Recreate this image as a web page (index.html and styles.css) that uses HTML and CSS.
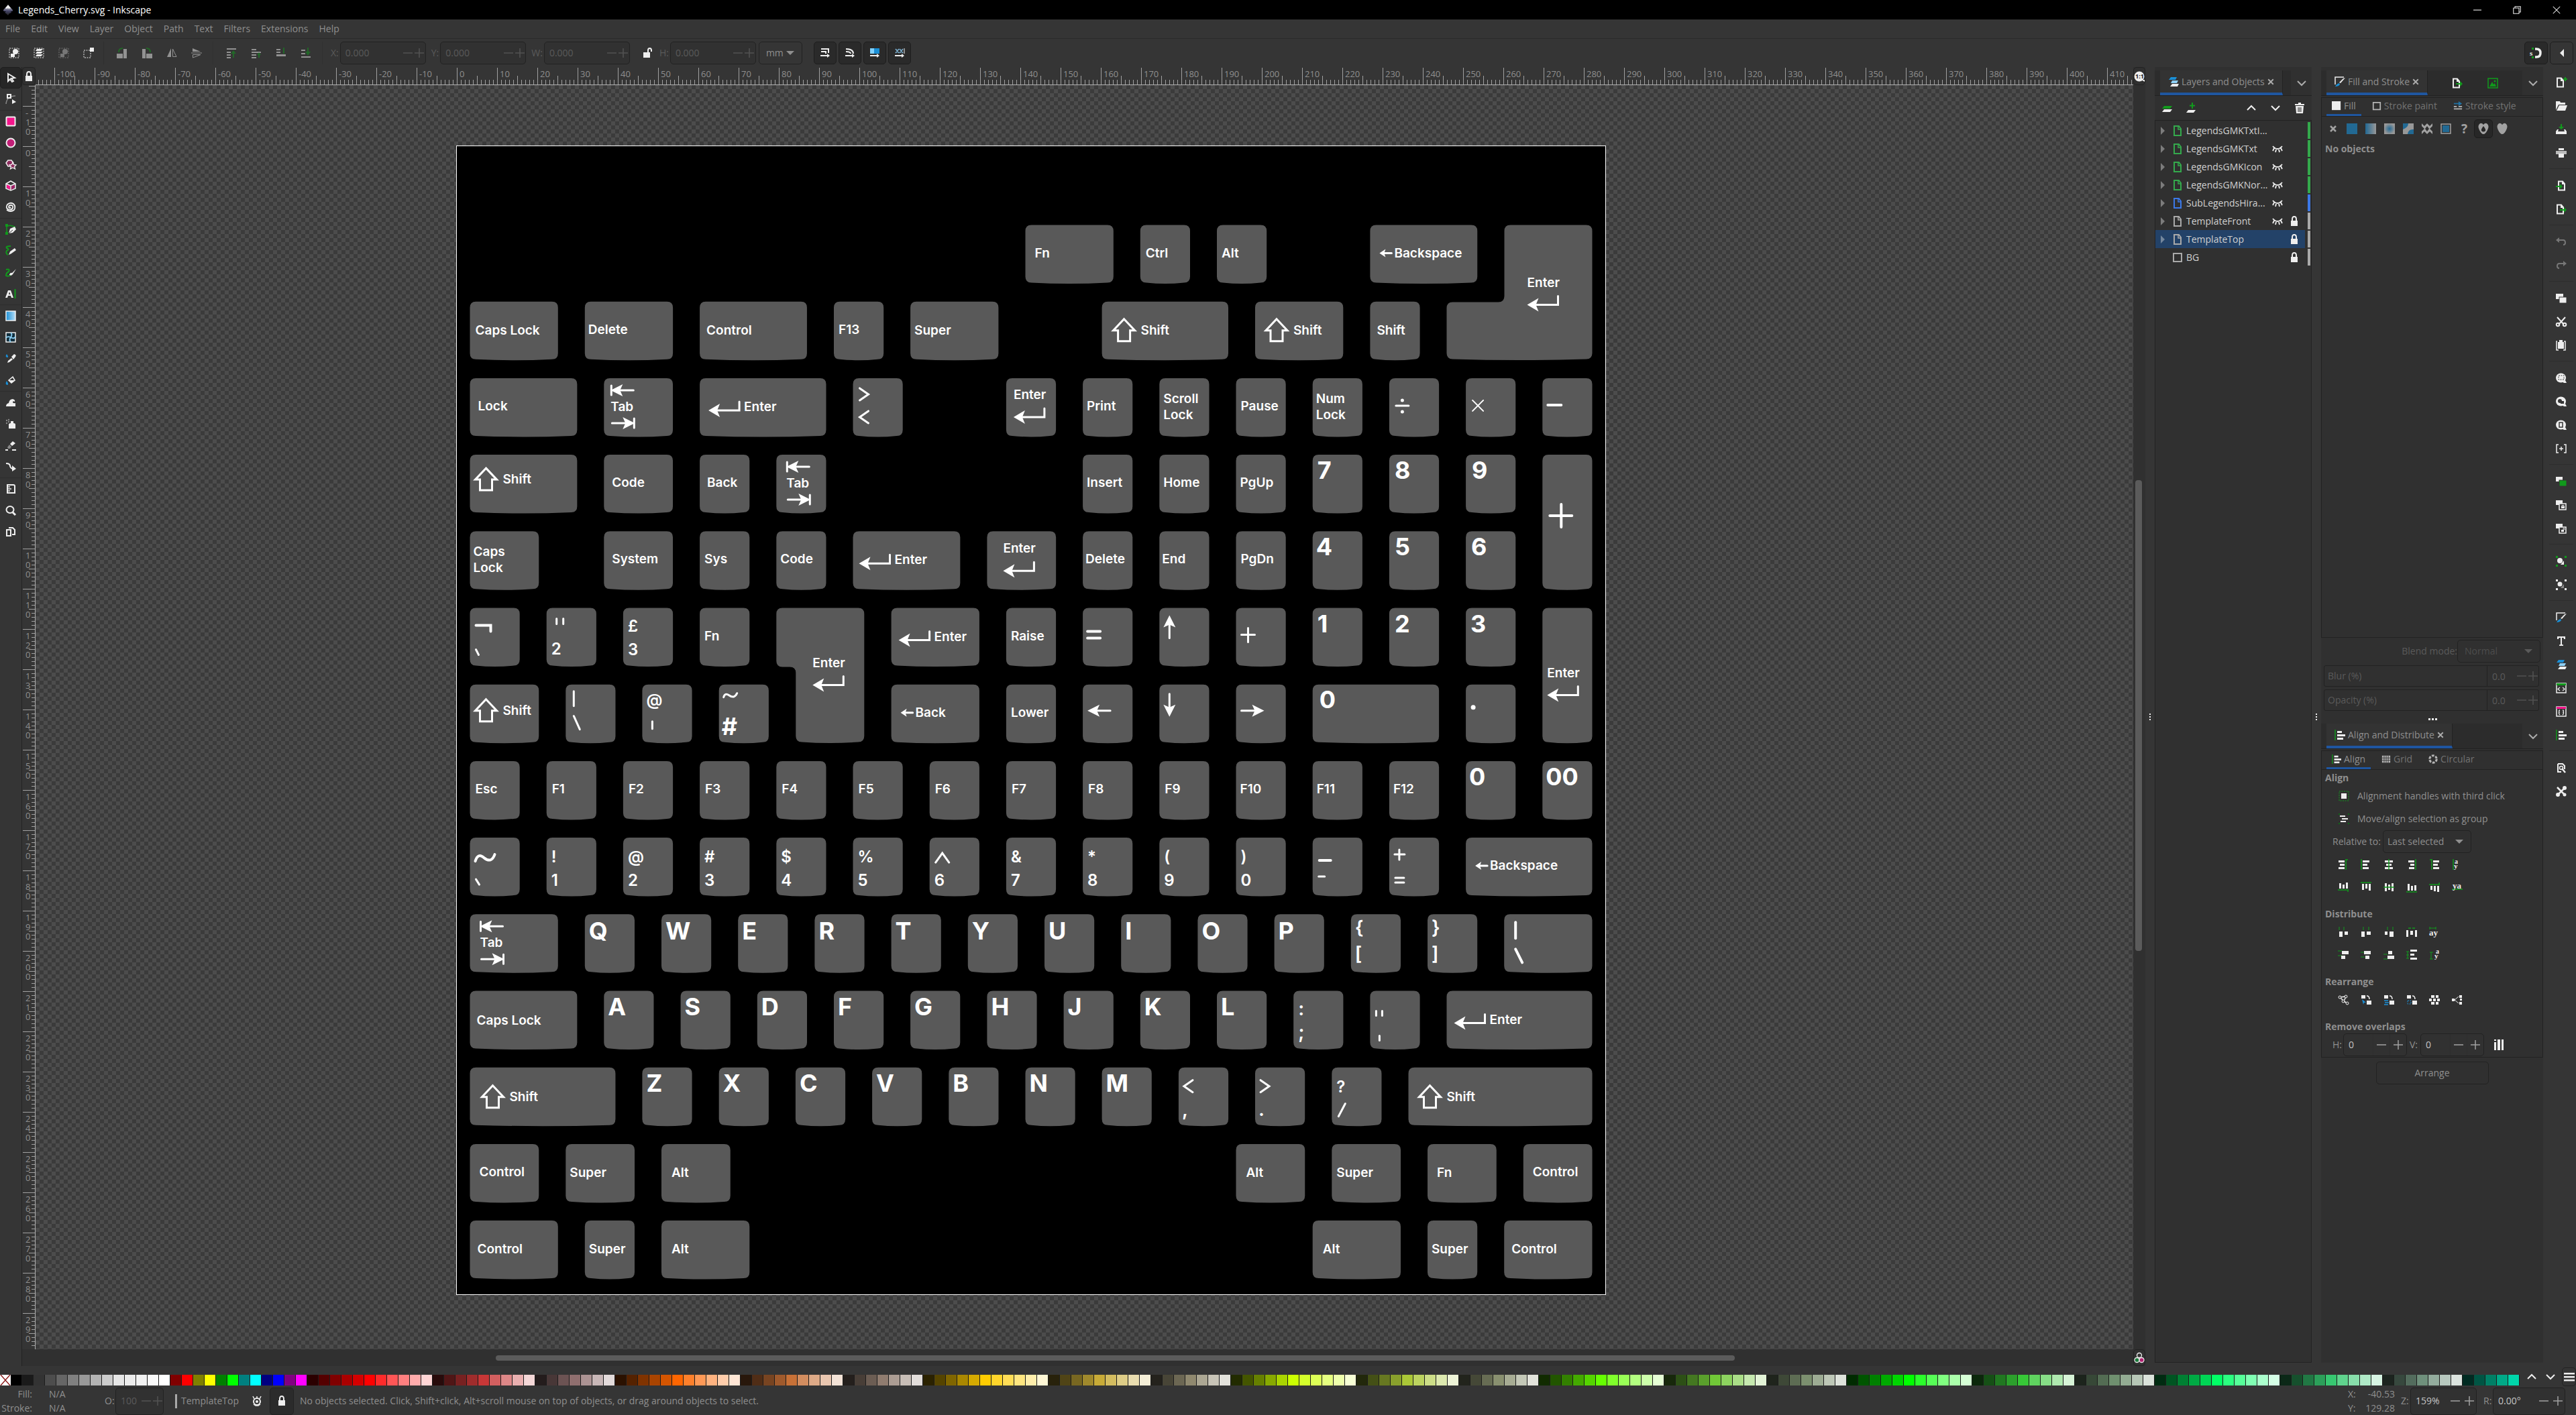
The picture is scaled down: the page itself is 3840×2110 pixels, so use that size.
FILE: index.html
```html
<!DOCTYPE html>
<html lang="en">
<head>
    <meta charset="UTF-8">
    <meta name="viewport" content="width=device-width, initial-scale=1.0">
    <title>Legends_Cherry.svg - Inkscape</title>
    <link rel="stylesheet" href="styles.css">
</head>
<body>
    <!-- Title bar -->
    <header class="titlebar">
        <span data-icon="logo"></span>
        <h1 class="title">Legends_Cherry.svg - Inkscape</h1>
        <div class="window-buttons">
            <button aria-label="Minimize" data-icon="minimize"></button>
            <button aria-label="Restore" data-icon="restore"></button>
            <button aria-label="Close" data-icon="winclose"></button>
        </div>
    </header>

    <!-- Menu -->
    <nav class="menubar">
        <a href="#">File</a>
        <a href="#">Edit</a>
        <a href="#">View</a>
        <a href="#">Layer</a>
        <a href="#">Object</a>
        <a href="#">Path</a>
        <a href="#">Text</a>
        <a href="#">Filters</a>
        <a href="#">Extensions</a>
        <a href="#">Help</a>
    </nav>

    <!-- Selector tool controls -->
    <div class="controls">
        <div class="control-group" data-buttons="selectAll selectLayers deselect touchSelect"></div>
        <div class="control-group dim" data-buttons="rotateLeft rotateRight flipH flipV"></div>
        <div class="control-group dim" data-buttons="raiseTop raise lower lowerBottom"></div>
        <div class="coords">
            <label for="pos-x">X:</label>
            <div class="spin disabled"><input id="pos-x" value="0.000" disabled><button disabled aria-label="Decrease X" data-icon="minus"></button><button disabled aria-label="Increase X" data-icon="plus"></button></div>
            <label for="pos-y">Y:</label>
            <div class="spin disabled"><input id="pos-y" value="0.000" disabled><button disabled aria-label="Decrease Y" data-icon="minus"></button><button disabled aria-label="Increase Y" data-icon="plus"></button></div>
            <label for="size-w">W:</label>
            <div class="spin disabled"><input id="size-w" value="0.000" disabled><button disabled aria-label="Decrease width" data-icon="minus"></button><button disabled aria-label="Increase width" data-icon="plus"></button></div>
            <button class="tool" aria-label="Lock ratio" data-icon="unlock"></button>
            <label for="size-h">H:</label>
            <div class="spin disabled"><input id="size-h" value="0.000" disabled><button disabled aria-label="Decrease height" data-icon="minus"></button><button disabled aria-label="Increase height" data-icon="plus"></button></div>
            <div class="dropdown units"><select aria-label="Units"><option>mm</option></select></div>
        </div>
        <div class="toggles" data-buttons="scaleStroke scaleCorners moveGradients movePatterns"></div>
        <div class="toggles snap" data-buttons="magnet collapse"></div>
    </div>

    <main class="workspace">
        <!-- Toolbox -->
        <div class="toolbox" data-buttons="select node | rect ellipse star box3d spiral | pen pencil brush type | gradient mesh dropper bucket | tweak spray eraser connector | measure zoom pages"></div>

        <!-- Canvas with rulers and scrollbars -->
        <div class="desk">
            <button class="guide-lock" aria-label="Lock guides" data-icon="lock"></button>
            <div class="ruler ruler-top"></div>
            <button class="zoom-fit" aria-label="Zoom 1:1" data-icon="oneToOne"></button>
            <div class="ruler ruler-left"></div>
            <div class="canvas"></div>
            <div class="scroll-v"><div class="thumb"></div></div>
            <div class="corner"></div>
            <div class="scroll-h"><div class="thumb"></div></div>
            <button class="color-managed" aria-label="Color managed view" data-icon="cms"></button>
        </div>

        <div class="grip" data-icon="dotsV"></div>

        <!-- Layers dialog -->
        <section class="dock layers">
            <div class="tabs">
                <div class="tab"><span data-icon="layers"></span>Layers and Objects<button aria-label="Close Layers" data-icon="close"></button></div>
                <button class="tab-menu" aria-label="Dialog menu" data-icon="down"></button>
            </div>
            <div class="layer-tools">
                <div data-buttons="newLayer addLayer"></div>
                <div data-buttons="up down trash"></div>
            </div>
            <div class="layer-list"></div>
        </section>

        <div class="grip" data-icon="dotsV"></div>

        <!-- Fill and stroke, align and distribute -->
        <div class="dock properties">
            <section class="fill-stroke">
                <div class="tabs">
                    <div class="tab"><span data-icon="fillStroke"></span>Fill and Stroke<button aria-label="Close Fill and Stroke" data-icon="close"></button></div>
                    <div class="tab-icons" data-buttons="export image"></div>
                    <button class="tab-menu" aria-label="Dialog menu" data-icon="down"></button>
                </div>
                <div class="page fill-page">
                    <div class="subtabs">
                        <button class="active"><span data-icon="fillBox"></span>Fill</button>
                        <button><span data-icon="strokeBox"></span>Stroke paint</button>
                        <button><span data-icon="strokeStyle"></span>Stroke style</button>
                    </div>
                    <div class="paints" data-buttons="none flat linear radial meshGrad pattern swatch unknown evenodd nonzero"></div>
                    <h2 class="heading">No objects</h2>
                </div>
                <div class="blend">
                    <label for="blend">Blend mode:</label>
                    <div class="dropdown disabled"><select id="blend" disabled><option>Normal</option></select></div>
                </div>
                <div class="scale-row">
                    <label for="blur">Blur (%)</label>
                    <input id="blur" value="0.0" disabled><button disabled aria-label="Less blur" data-icon="minus"></button><button disabled aria-label="More blur" data-icon="plus"></button>
                </div>
                <div class="scale-row">
                    <label for="opacity">Opacity (%)</label>
                    <input id="opacity" value="0.0" disabled><button disabled aria-label="Less opacity" data-icon="minus"></button><button disabled aria-label="More opacity" data-icon="plus"></button>
                </div>
            </section>

            <div class="grip-h" data-icon="dotsH"></div>

            <section class="align">
                <div class="tabs">
                    <div class="tab"><span data-icon="align"></span>Align and Distribute<button aria-label="Close Align" data-icon="close"></button></div>
                    <button class="tab-menu" aria-label="Dialog menu" data-icon="down"></button>
                </div>
                <div class="page">
                    <div class="subtabs">
                        <button class="active"><span data-icon="align"></span>Align</button>
                        <button><span data-icon="grid"></span>Grid</button>
                        <button><span data-icon="circular"></span>Circular</button>
                    </div>
                    <h2 class="heading">Align</h2>
                    <button class="option"><span data-icon="handles"></span>Alignment handles with third click</button>
                    <button class="option"><span data-icon="group"></span>Move/align selection as group</button>
                    <div class="relative">
                        <label for="relative">Relative to:</label>
                        <div class="dropdown"><select id="relative"><option>Last selected</option></select></div>
                    </div>
                    <div class="icon-row" data-buttons="alRightAnchor alLeft alCenter alRight alLeftAnchor alTextH"></div>
                    <div class="icon-row" data-buttons="alBottomAnchor alTop alMiddle alBottom alTopAnchor alTextV"></div>
                    <h2 class="heading spaced">Distribute</h2>
                    <div class="icon-row" data-buttons="diLeft diCenter diRight diGapH diTextH"></div>
                    <div class="icon-row" data-buttons="diTop diMiddle diBottom diGapV diTextV"></div>
                    <h2 class="heading spaced">Rearrange</h2>
                    <div class="icon-row" data-buttons="graph swapSel swapZ swapRot random unclump"></div>
                    <h2 class="heading spaced">Remove overlaps</h2>
                    <div class="overlaps">
                        <label for="gap-h">H:</label>
                        <div class="spin"><input id="gap-h" value="0"><button aria-label="Decrease H" data-icon="minus"></button><button aria-label="Increase H" data-icon="plus"></button></div>
                        <label for="gap-v">V:</label>
                        <div class="spin"><input id="gap-v" value="0"><button aria-label="Decrease V" data-icon="minus"></button><button aria-label="Increase V" data-icon="plus"></button></div>
                        <button class="tool" aria-label="Remove overlaps" data-icon="overlap"></button>
                    </div>
                </div>
                <button class="arrange">Arrange</button>
            </section>
        </div>

        <!-- Commands bar -->
        <div class="commands" data-buttons="docNew open save print | import export | undo redo | duplicate cut paste | zoomSel zoomDraw zoomPage zoomCenter | clone cloneLock cloneUnlock | groupObj ungroup | fillStroke text layers xml selectors align | docProps prefs"></div>
    </main>

    <!-- Palette -->
    <div class="palette-bar">
        <div class="palette"></div>
        <div class="palette-buttons" data-buttons="up down menu"></div>
    </div>

    <!-- Status bar -->
    <footer class="status">
        <div class="style-info">
            <span>Fill:</span><span>N/A</span>
            <span>Stroke:</span><span>N/A</span>
        </div>
        <label class="off" for="master-opacity">O:</label>
        <div class="spin small disabled"><input id="master-opacity" value="100" disabled><button disabled aria-label="Less" data-icon="minus"></button><button disabled aria-label="More" data-icon="plus"></button></div>
        <button class="current-layer">TemplateTop</button>
        <button class="tool" aria-label="Layer visibility" data-icon="eye"></button>
        <button class="tool pressed" aria-label="Layer lock" data-icon="lock"></button>
        <p class="message">No objects selected. Click, Shift+click, Alt+scroll mouse on top of objects, or drag around objects to select.</p>
        <div class="pointer">
            <span>X:</span><span>-40.53</span>
            <span>Y:</span><span>129.28</span>
        </div>
        <label for="zoom">Z:</label>
        <div class="spin zoom"><input id="zoom" value="159%"><button aria-label="Zoom out" data-icon="minus"></button><button aria-label="Zoom in" data-icon="plus"></button></div>
        <label for="rotation">R:</label>
        <div class="spin zoom"><input id="rotation" value="0.00°"><button aria-label="Rotate left" data-icon="minus"></button><button aria-label="Rotate right" data-icon="plus"></button></div>
    </footer>

    <script src="script.js"></script>
</body>
</html>
```
FILE: styles.css
```css
/* Global Styles */
* {
    box-sizing: border-box;
}

html, body {
    height: 100%;
    margin: 0;
}

body {
    display: flex;
    flex-direction: column;
    overflow: hidden;
    background: #353535;
    color: #8f8f8f;
    font: 14px/16px "Open Sans", "Noto Sans", sans-serif;
}

button, input, select {
    margin: 0;
    padding: 0;
    border: none;
    background: none;
    color: inherit;
    font: inherit;
}

button {
    display: flex;
    align-items: center;
    justify-content: center;
    white-space: nowrap;
}

svg {
    display: block;
}

[data-icon], [data-buttons] {
    display: flex;
    align-items: center;
}

.icon {
    width: 16px;
    height: 16px;
    overflow: visible;
}

/* Title bar */
.titlebar {
    display: flex;
    align-items: center;
    height: 29px;
    padding-left: 4px;
    gap: 7px;
    background: #000;
    color: #fff;
    flex: none;
}

.title {
    margin: 0;
    flex: 1;
    font-size: 14px;
    font-weight: 400;
}

.window-buttons {
    display: flex;
}

.window-buttons button {
    width: 59px;
    height: 28px;
}

.window-buttons .icon {
    width: 12px;
    height: 12px;
}

/* Menu */
.menubar {
    display: flex;
    align-items: center;
    gap: 16px;
    height: 29px;
    padding-left: 8px;
    border-bottom: 1px solid #2b2b2b;
    flex: none;
}

.menubar a {
    color: inherit;
    text-decoration: none;
}

/* Selector tool controls */
.controls {
    display: flex;
    align-items: center;
    height: 42px;
    padding: 0 4px 0 2px;
    flex: none;
}

.control-group {
    padding: 0 4px 0 0;
    border-right: 1px solid #2e2e2e;
}

.control-group button {
    width: 37px;
    height: 34px;
}

.control-group + .control-group {
    padding: 0 6px 0 8px;
}

.dim {
    opacity: 0.5;
}

.coords {
    display: flex;
    align-items: center;
    padding-left: 12px;
}

.coords label {
    color: #5a5a5a;
    padding-right: 2px;
}

.coords .spin {
    width: 128px;
    margin-right: 8px;
}

.coords .units {
    margin-left: -4px;
}

.coords .tool {
    width: 36px;
}

.spin {
    display: flex;
    align-items: center;
    height: 34px;
    border: 1px solid #222;
    border-radius: 5px;
    background: #313131;
    color: #c4c4c4;
}

.spin input {
    flex: 1;
    min-width: 0;
    padding-left: 7px;
}

.spin button {
    width: 25px;
    height: 32px;
    border-left: 1px solid #2e2e2e;
}

.spin .icon {
    opacity: 0.6;
}

.disabled, .disabled input {
    color: #5a5a5a;
}

.disabled .icon {
    opacity: 0.18;
}

.coords .spin button {
    width: 17px;
    border: none;
}

.dropdown {
    position: relative;
    display: flex;
    height: 34px;
    border: 1px solid #222;
    border-radius: 5px;
}

.dropdown select {
    width: 100%;
    padding: 0 10px;
    appearance: none;
}

.dropdown option {
    background: #313131;
}

.dropdown::after {
    content: "";
    position: absolute;
    right: 11px;
    top: 13px;
    border: 6px solid transparent;
    border-top-color: currentColor;
    border-bottom: none;
    pointer-events: none;
}

.units {
    width: 65px;
}

.toggles {
    gap: 3px;
    margin-left: 17px;
}

.toggles button {
    width: 34px;
    height: 34px;
    border: 1px solid #1e1e1e;
    border-radius: 5px;
    background: #2a2a2a;
}

.snap {
    margin-left: auto;
}

.snap button {
    width: 35px;
}

.snap button + button {
    background: none;
}

/* Main area */
.workspace {
    display: flex;
    flex: 1;
    min-height: 0;
}

.toolbox {
    flex-direction: column;
    width: 33px;
    border-right: 1px solid #232323;
}

.toolbox button {
    width: 32px;
    height: 32px;
    flex: none;
}

.toolbox button:first-child {
    border: 1px solid #1e1e1e;
    border-radius: 5px;
    background: #262626;
}

.toolbox hr {
    width: 100%;
    margin: 0;
    border: none;
    border-top: 1px solid #2d2d2d;
}

/* Canvas */
.desk {
    display: grid;
    grid-template-columns: 20px 1fr 18px;
    grid-template-rows: 27px 1fr 25px;
    flex: 1;
    min-width: 0;
    background: #303030;
}

.guide-lock, .zoom-fit, .color-managed {
    border: 1px solid #222;
    border-radius: 5px;
}

.ruler {
    display: flex;
    overflow: hidden;
    background-color: #353535;
    font-size: 13px;
    line-height: 14px;
}

/* 1mm is 6px, the page starts 628px right of and 91px below the canvas corner */
.ruler-top {
    padding-left: 28px;
    border-bottom: 1px solid #b0b0b0;
    background-image:
        repeating-linear-gradient(90deg, #a0a0a0 0 1px, transparent 1px 60px),
        repeating-linear-gradient(90deg, #a0a0a0 0 1px, transparent 1px 30px),
        repeating-linear-gradient(90deg, #a0a0a0 0 1px, transparent 1px 6px);
    background-size: 3600px 25px, 3600px 13px, 3600px 7px;
    background-position: -32px 100%, -32px 100%, -32px 100%;
    background-repeat: repeat-x;
}

.ruler-top span {
    flex: 0 0 60px;
    padding: 3px 0 0 4px;
}

.ruler-left {
    flex-direction: column;
    padding-top: 31px;
    border-right: 1px solid #b0b0b0;
    background-image:
        repeating-linear-gradient(#a0a0a0 0 1px, transparent 1px 60px),
        repeating-linear-gradient(#a0a0a0 0 1px, transparent 1px 30px),
        repeating-linear-gradient(#a0a0a0 0 1px, transparent 1px 6px);
    background-size: 18px 3600px, 9px 3600px, 5px 3600px;
    background-position: 100% -29px;
    background-repeat: repeat-y;
}

.ruler-left span {
    flex: 0 0 60px;
    width: 8px;
    margin-left: 5px;
    padding-top: 3px;
    word-break: break-all;
}

.canvas {
    overflow: hidden;
    background: repeating-conic-gradient(#3b3b3b 0 25%, #4c4c4c 0 50%) 0 0 / 12px 12px;
}

.canvas svg {
    width: 100%;
    height: 100%;
}

.keycap {
    fill: #595959;
}

.legend {
    fill: #fff;
    stroke: none;
    font-family: Inter, "Liberation Sans", sans-serif;
    font-size: 19px;
    font-weight: 600;
}

.symbol {
    font-size: 24px;
}

.bracket {
    font-size: 28px;
}

.letter {
    font-size: 36px;
    font-weight: 700;
}

.stroke {
    fill: none;
    stroke: #fff;
    stroke-width: 3;
    stroke-linecap: round;
}

.scroll-v {
    padding: 589px 5px 0 3px;
}

.scroll-v .thumb {
    height: 702px;
}

.scroll-h {
    padding: 9px 594px 0 686px;
}

.scroll-h .thumb {
    height: 8px;
}

.thumb {
    border-radius: 4px;
    background: #5b5b5b;
}

.grip {
    width: 14px;
    justify-content: center;
}

.grip-h {
    height: 15px;
    justify-content: center;
}

/* Docked dialogs */
.dock {
    display: flex;
    flex-direction: column;
    padding-top: 5px;
    margin-bottom: 5px;
    background: #303030;
}

.tabs {
    display: flex;
    height: 38px;
    border-bottom: 1px solid #222;
    background: #2c2c2c;
}

.tab {
    display: flex;
    align-items: center;
    gap: 4px;
    margin-left: 8px;
    padding: 0 12px;
    border-bottom: 4px solid #1f56a0;
    border-right: 1px solid #222;
    background: #333;
    white-space: nowrap;
}

.tab button .icon {
    width: 10px;
    height: 10px;
    opacity: 0.65;
}

.tab-menu {
    width: 31px;
    margin-left: auto;
    background: #303030;
}

.tab-menu .icon {
    opacity: 0.65;
}

.tab-icons {
    flex: 1;
    justify-content: space-evenly;
}

.layers {
    width: 234px;
}

.layer-tools {
    display: flex;
    justify-content: space-between;
    height: 36px;
}

.layer-tools button {
    width: 36px;
    height: 36px;
}

.layer-list {
    flex: 1;
    padding-top: 1px;
    border: 1px solid #222;
}

.layer {
    display: grid;
    grid-template-columns: 22px 22px 1fr 24px 26px 7px 5px;
    align-items: center;
    height: 27px;
    color: #d0d0d0;
}

.layer .icon {
    margin: 0 auto;
}

.layer .expand {
    opacity: 0.4;
}

.layer.selected {
    background: linear-gradient(#234268, #234268) 0 0 / calc(100% - 9px) 100% no-repeat;
}

.layer .name {
    padding-left: 2px;
    white-space: nowrap;
}

.tag {
    grid-column: 7;
    width: 4px;
    height: 25px;
    background: #a9a9a9;
}

.tag.green {
    background: #34a94c;
}

.tag.blue {
    background: #3b78e7;
}

.properties {
    width: 331px;
}

.page {
    margin-top: 2px;
    padding-bottom: 1px;
    border: 1px solid #222;
}

.fill-page {
    height: 806px;
}

.subtabs {
    display: flex;
    gap: 8px;
    height: 28px;
    padding-left: 7px;
    border-bottom: 1px solid #222;
}

.subtabs button {
    gap: 4px;
    padding: 0 8px;
    border-bottom: 3px solid transparent;
    opacity: 0.7;
}

.subtabs .active {
    border-color: #1f56a0;
    opacity: 1;
}

.subtabs .icon {
    width: 14px;
    height: 14px;
}

.paints {
    height: 36px;
    padding-left: 3px;
    opacity: 0.6;
}

.paints button {
    width: 28px;
    height: 28px;
}

.paints button:nth-child(9) {
    border: 1px solid #111;
    border-radius: 5px;
    background: #222;
}

.heading {
    margin: 2px 0 0;
    padding-left: 5px;
    font-size: 14px;
    line-height: 20px;
    font-weight: 700;
}

.heading.spaced {
    margin-top: 13px;
}

.blend {
    display: flex;
    align-items: center;
    justify-content: flex-end;
    margin: 3px 4px 3px 0;
    color: #5a5a5a;
}

.blend .dropdown {
    width: 124px;
}

.scale-row {
    display: flex;
    align-items: center;
    height: 32px;
    margin: 4px 6px 4px 4px;
    border: 1px solid #222;
    border-radius: 3px;
    color: #5a5a5a;
}

.scale-row label {
    flex: 1;
    padding-left: 5px;
}

.scale-row input {
    width: 43px;
    height: 30px;
    padding-left: 7px;
    border-left: 1px solid #222;
}

.scale-row button {
    width: 17px;
    height: 30px;
}

.scale-row .icon {
    opacity: 0.18;
}

.option {
    gap: 12px;
    height: 34px;
    padding-left: 25px;
}

.relative, .overlaps {
    display: flex;
    align-items: center;
    height: 34px;
    padding-left: 16px;
    gap: 3px;
}

.relative .dropdown {
    width: 132px;
}

.relative select {
    padding-left: 6px;
}

.icon-row {
    height: 34px;
    padding-left: 15px;
}

.icon-row button {
    width: 34px;
    height: 34px;
}

.overlaps {
    gap: 0;
}

.overlaps label {
    width: 16px;
}

.overlaps .spin {
    width: 95px;
    margin-right: 4px;
}

.tool {
    width: 36px;
    height: 34px;
}

.arrange {
    width: 168px;
    height: 34px;
    margin: 6px auto 0;
    border: 1px solid #222;
    border-radius: 5px;
}

/* Commands bar */
.commands {
    flex-direction: column;
    width: 42px;
    margin-left: 7px;
    padding: 5px 2px 0 0;
}

.commands button {
    width: 40px;
    height: 35px;
}

.commands hr {
    width: 36px;
    margin: 6px 0 7px;
    border: none;
    border-top: 1px solid #2d2d2d;
}

/* Palette */
.palette-bar {
    display: flex;
    height: 31px;
    padding-top: 1px;
    flex: none;
}

.palette {
    display: flex;
    flex: 1;
    height: 16px;
    margin-top: 12px;
}

.swatch {
    flex: 1;
    border-right: 1px solid #1c1c1c;
}

.swatch-none {
    border: none;
    background: #fff;
}

.swatch-none svg {
    width: 100%;
    height: 100%;
}

.palette-buttons {
    width: 83px;
    justify-content: space-between;
    padding-left: 6px;
}

.palette-buttons button {
    width: 21px;
    height: 28px;
}

.palette-buttons button:last-child {
    border: 1px solid #222;
    border-radius: 5px;
}

/* Status bar */
.status {
    display: flex;
    align-items: center;
    height: 42px;
    padding-right: 16px;
    flex: none;
}

.style-info {
    display: grid;
    grid-template-columns: 48px 1fr;
    width: 156px;
    column-gap: 25px;
    line-height: 21px;
}

.style-info span:nth-child(odd) {
    text-align: right;
}

.status .spin {
    height: 41px;
}

.status label {
    width: 14px;
}

.status .small {
    width: 72px;
    margin: 0 17px 0 2px;
}

.small button {
    width: 17px;
    border: none;
}

.current-layer {
    padding-left: 6px;
    border-left: 3px solid #a9a9a9;
    height: 21px;
}

.status .tool {
    height: 41px;
    margin-left: 9px;
}

.status .pressed {
    margin-left: 1px;
    border: 1px solid #222;
    border-radius: 5px;
    background: #2b2b2b;
}

.message {
    flex: 1;
    margin: 0 0 0 9px;
}

.pointer {
    display: grid;
    grid-template-columns: 20px 50px;
    margin-right: 9px;
    line-height: 21px;
}

.pointer span:nth-child(even) {
    text-align: right;
}

.status .zoom {
    width: 99px;
    margin-right: 10px;
}

.status .zoom:last-child {
    width: 108px;
    margin-right: 0;
}

.zoom button {
    width: 21px;
    border: none;
}
```
FILE: script.js
```js
// ---------- Icons, all on a 16x16 grid ----------
const W = '#eeeeee', G = '#119a1c', B = '#1a8fd6', P = '#f5168c';
const box = (x, y, w, h, c = W) => `<rect x="${x}" y="${y}" width="${w}" height="${h}" fill="${c}"/>`;
const fill = (d, c = W) => `<path d="${d}" fill="${c}"/>`;
const line = (d, c = W, w = 1.5) => `<path d="${d}" fill="none" stroke="${c}" stroke-width="${w}"/>`;
const dash = (x, y, w, h, c = W) => `<rect x="${x}" y="${y}" width="${w}" height="${h}" fill="none" stroke="${c}" stroke-dasharray="2 1.5"/>`;
const glyph = (x, y, s, t) => `<text x="${x}" y="${y}" font-size="${s}" fill="${W}" font-family="Liberation Serif, serif" font-weight="bold">${t}</text>`;
const sheet = (x = 0) => line(`M${3 + x} 1.5H${9 + x}L${12 + x} 5V14.5H${3 + x}Z`, W, 2) + fill(`M${8 + x} 1V6H${13 + x}Z`);
const corners = c => box(0, 0, 3, 3, c) + box(13, 0, 3, 3, c) + box(0, 13, 3, 3, c) + box(13, 13, 3, 3, c);
const lens = '<ellipse cx="7.5" cy="7.5" rx="7.5" ry="7" fill="#eee"/>' + fill('M9 13L14 11L16 15H12Z');

const icons = {
    logo: '<defs><linearGradient id="lg" x1="0" y1="0" x2="0" y2="1"><stop offset="0" stop-color="#fff"/><stop offset=".6" stop-color="#446"/><stop offset="1" stop-color="#222"/></linearGradient></defs>' + fill('M8 0L15 8Q16 10 12 10L13 12L10 13L8 16L5 13L3 12L5 10Q0 10 1 8Z', 'url(#lg)') + fill('M8 1L12 5L9 6L8 5L6 6L4 5Z'),
    minimize: line('M0 8H16', W, 1.5),
    restore: line('M1 4H12V15H1ZM4 4V1H15V12H12', W, 1.4),
    winclose: line('M1 1L15 15M15 1L1 15', W, 1.4),
    minus: line('M1 8H15', W, 1.5),
    plus: line('M1 8H15M8 1V15', W, 1.5),
    down: line('M2 5L8 11L14 5', W, 2),
    up: line('M2 11L8 5L14 11', W, 2),
    close: line('M2 2L14 14M14 2L2 14', W, 3),
    dotsV: box(7, 3, 2, 2) + box(7, 7, 2, 2) + box(7, 11, 2, 2),
    dotsH: box(2, 7, 3, 3) + box(7, 7, 3, 3) + box(12, 7, 3, 3),
    menu: box(0, 2, 16, 2.5) + box(0, 7, 16, 2.5) + box(0, 12, 16, 2.5),
    selectAll: dash(1, 1, 14, 14) + '<circle cx="10" cy="6" r="4" fill="#eee"/>' + fill('M3 9H9V14H3Z'),
    selectLayers: dash(1, 1, 14, 14) + fill('M5 2H14L11 5H3ZM5 6H14L11 9H3ZM5 10H14L11 13H3Z'),
    deselect: '<g opacity=".35">' + dash(1, 1, 14, 14) + '<circle cx="10" cy="6" r="4" fill="#eee"/>' + fill('M3 9H9V14H3Z') + '</g>',
    touchSelect: dash(1, 4, 10, 11) + box(10, 0, 6, 6),
    rotateLeft: box(0, 9, 9, 7) + box(10, 2, 5, 14) + line('M3 7Q3 1 9 1', G, 2),
    rotateRight: box(7, 9, 9, 7) + box(1, 2, 5, 14) + line('M13 7Q13 1 7 1', G, 2),
    flipH: fill('M7 1V14H1Z') + line('M9.5 2L15 13.5H9.5Z', W, 1),
    flipV: fill('M2 1L14 6H2Z') + line('M0 8H16', W, 1) + line('M2.5 10.5H14L2.5 15Z', W, 1),
    raiseTop: box(1, 1, 14, 2) + box(1, 6, 6, 2) + box(1, 10, 6, 2) + box(1, 14, 6, 2) + fill('M11 4L15 9H12V15H10V9H7Z', G),
    raise: box(1, 2, 7, 2) + box(1, 6, 14, 2) + box(1, 10, 7, 2) + box(1, 14, 7, 2) + fill('M12 7L15 11H13V15H11V11H9Z', G),
    lower: box(1, 2, 6, 2) + box(1, 6, 6, 2) + box(1, 10, 14, 3) + line('M12 0V9', G, 2),
    lowerBottom: box(1, 3, 6, 2) + box(1, 8, 6, 2) + box(1, 13, 14, 2) + fill('M10 0H12V6H15L11 12L7 6H10Z', G),
    unlock: line('M9 8V4Q9 1 11.5 1Q14 1 14 4V6', W, 2) + box(2, 7, 10, 8),
    lock: line('M5 8V5Q5 1 8 1Q11 1 11 5V8', W, 2) + box(3, 7, 10, 8),
    scaleStroke: line('M2 2H13V8M2 6H9V9', W, 2) + line('M1 12H12', W, 2) + fill('M11 9L15 12L11 15Z'),
    scaleCorners: line('M2 2Q13 2 13 9M2 6Q9 6 9 9', W, 2) + line('M1 12H12', W, 2) + fill('M11 9L15 12L11 15Z'),
    moveGradients: box(1, 1, 14, 8, B) + box(1, 1, 6, 8, '#7fd0ff') + line('M1 12H12', W, 2) + fill('M11 9L15 12L11 15Z'),
    movePatterns: line('M2 2L7 8M2 8L7 2M8 2L13 8M8 8L13 2', '#7fb6d8', 1.5) + line('M15 1V9', W, 1) + line('M1 12H12', W, 2) + fill('M11 9L15 12L11 15Z'),
    magnet: line('M6 2H8Q14 2 14 8Q14 14 8 14H6', W, 3.5) + box(1, 0, 3, 3, G) + box(1, 13, 3, 3, G) + glyph(-2, 12, 11, 's'),
    collapse: fill('M11 2V14L5 8Z'),
    select: line('M4 2L14 8L9 9L12 13L10 14L7 10L4 13Z', W, 2),
    node: line('M1 15Q2 3 15 3', '#888', 1.5) + line('M3 1H8V6H3Z', W, 2) + fill('M10 8L16 12L10 15Z'),
    rect: `<rect x="1.5" y="1.5" width="13" height="13" rx="1" fill="${P}" stroke="#eee" stroke-width="2"/>`,
    ellipse: '<circle cx="8" cy="8" r="6.5" fill="#c21f77" stroke="#eee" stroke-width="2"/>',
    star: '<path d="M1 6L4 2H9L12 6L9 11H4Z" fill="#8c2b5d" stroke="#eee" stroke-width="1.5"/><path d="M11 5L12.5 8.5L16 9L13.5 11.5L14.5 15L11 13L7.5 15L8.5 11.5L6 9L9.5 8.5Z" fill="#8c2b5d" stroke="#eee" stroke-width="1.3"/>',
    box3d: '<path d="M1 5L8 1L15 5V12L8 15L1 12Z" fill="#353535" stroke="#eee" stroke-width="1.6"/>' + fill('M2 6L7.5 8V14L2 11Z', P) + fill('M9 8L14 6V11L9 14Z', '#a02268') + line('M1 5L8 8L15 5M8 8V15'),
    spiral: line('M2 12Q8 16 13 12Q16 7 12 3Q7 0 3 4Q0 9 4 11Q9 13 11 9Q12 5 8 5Q5 5 5 8Q6 10 8 8', W, 1.8),
    pen: box(0, 0, 4, 4, G) + box(0, 12, 4, 4, G) + line('M2 3V13M4 3Q8 1 15 5', G, 1.5) + fill('M5 14L7 7L14 4L16 8L11 13Z') + line('M5 14L11 9', '#353535', 1),
    pencil: line('M8 1Q0 1 2 4Q7 6 2 8Q0 12 4 14', G, 2) + fill('M5 14L7 9L14 4L16 7L9 12Z'),
    brush: line('M1 4Q7 2 5 7Q1 9 1 13Q4 15 8 12', G, 2) + fill('M6 12Q7 8 10 9L16 3L11 11Q9 14 6 12Z'),
    type: fill('M0 14L4 3H8L12 14H9L8 11H4L3 14ZM5 9H7.5L6 5Z') + box(13.5, 1, 2, 14, G),
    gradient: `<defs><linearGradient id="gr"><stop offset="0" stop-color="${B}"/><stop offset="1" stop-color="#b5def7"/></linearGradient></defs><rect x="1" y="1" width="14" height="14" fill="url(#gr)" stroke="#eee" stroke-width="1.5"/>`,
    mesh: '<rect x="1" y="1" width="14" height="14" fill="#12303f" stroke="#eee" stroke-width="1.5"/>' + line('M8 8Q11 4 8 1M8 8Q5 12 8 15M8 8Q3 6 1 9M8 8Q13 11 15 7', '#8cd0f4', 1.8),
    dropper: fill('M2 1Q6 6 2.5 6Q-1 5 2 1Z', B) + fill('M3 14L4 11L9 7L11 9L6 13ZM9 5L13 1Q17 2 15 5L12 9Z'),
    bucket: fill('M2 9Q6 15 2.5 15Q-1 14 2 9Z', B) + line('M5 8L11 3L14 8L9 12Z', W, 1.6) + fill('M5 8H14L9 12Z'),
    tweak: fill('M1 14Q1 10 5 9Q6 3 11 3Q15 4 14 7Q11 5 11 8Q12 10 15 9V14Z'),
    spray: fill('M5 9Q5 7 8 7V4H12V7Q15 7 15 9V15H5Z') + '<g fill="#888"><circle cx="2" cy="3" r="1.2"/><circle cx="5" cy="2" r="1.2"/><circle cx="2" cy="7" r="1.2"/><circle cx="5" cy="5" r="1.2"/></g>',
    eraser: fill('M3 11L6 7L9 10L7 13H4Z', '#888') + fill('M7 6L11 2L15 5L10 9Z') + box(0, 14, 4, 2) + box(10, 14, 6, 2),
    connector: line('M1 3Q7 3 7 7Q8 11 12 11', W, 2) + fill('M10 6L16 11L10 15Z'),
    measure: line('M3 2H12Q14 2 14 4V14H3Z', W, 2) + line('M3 5H7M3 8H9M3 11H7', W, 1.5),
    zoom: '<ellipse cx="7" cy="7" rx="5.5" ry="5" fill="none" stroke="#eee" stroke-width="2"/>' + line('M11 11L15 15', W, 3),
    pages: line('M2 5H8V14H2ZM6 3V2H11L14 5V12H10', W, 2),
    oneToOne: '<circle cx="8" cy="8" r="7.5" fill="#eee"/>' + fill('M11 13H16V16Z') + '<text x="2" y="11" font-size="9" font-weight="bold" fill="#222">1:1</text>',
    cms: '<g fill="#353535" stroke="#eee" stroke-width="1.3"><circle cx="8" cy="4" r="3.5"/><circle cx="4.5" cy="11" r="3.5" fill="#1a7a3a"/><circle cx="11.5" cy="11" r="3.5" fill="#b02070"/></g>',
    layers: fill('M4 1H13L11 5H1Z', B) + fill('M6 6H15L13 10H4Z', '#8fd0f5') + fill('M6 11H16L14 15H3Z'),
    newLayer: fill('M4 5H16L13 9H1Z', G) + fill('M4 10H16L13 14H1Z'),
    addLayer: fill('M4 11H15L12 15H1Z') + line('M10 0V9M6 4.5H14', G, 2),
    trash: box(1, 2, 14, 2) + box(6, 0, 4, 2) + fill('M2 5H14L13 16H3Z') + line('M6 7V14M8 7V14M10 7V14', '#303030', 1),
    expand: fill('M5 2L11 8L5 14Z'),
    eyeClosed: line('M1 4Q8 12 15 4M3 7L1 11M6 9L5 13M10 9L11 13M13 7L15 11', W, 1.8),
    eye: '<circle cx="8" cy="9" r="5" fill="none" stroke="#eee" stroke-width="2"/><circle cx="8" cy="9" r="2" fill="#eee"/>' + line('M2 1L4 5M8 1V4M14 1L12 5M3 13L6 15H10L13 13', W, 1.5),
    fillStroke: line('M14 1H1V12', W, 1.5) + fill('M16 2L9 10L7 9L13 3Z') + fill('M1 15Q3 11 7 10L8 12Q6 15 1 15Z', B),
    fillBox: box(0, 0, 15, 15),
    strokeBox: line('M2 2H14V14H2Z', W, 2),
    strokeStyle: line('M1 4H10', B, 2) + fill('M9 0L15 4L9 8Z', B) + line('M1 9H6M9 9H15', W, 2) + line('M1 13H15', W, 2),
    export: sheet(-1) + line('M6 9H13', G, 2) + fill('M12 5L16 9L12 13Z', G),
    import: sheet(1) + line('M0 9H7', G, 2) + fill('M6 5L10 9L6 13Z', G),
    image: line('M1 1H15V15H1Z', G, 1.5) + fill('M3 13L7 6L9 10L11 8L13 13Z', G) + '<circle cx="11" cy="5" r="1.5" fill="#119a1c"/>',
    none: line('M4 4L12 12M12 4L4 12', W, 2.5),
    flat: box(0, 0, 16, 16, B),
    linear: `<defs><linearGradient id="ln"><stop offset="0" stop-color="${B}"/><stop offset="1" stop-color="#ddd"/></linearGradient></defs>` + box(0, 0, 16, 16, 'url(#ln)'),
    radial: `<defs><radialGradient id="rd"><stop offset="0" stop-color="${B}"/><stop offset="1" stop-color="#ddd"/></radialGradient></defs>` + box(0, 0, 16, 16, 'url(#rd)'),
    meshGrad: box(0, 0, 16, 16, '#ddd') + fill('M0 0H8Q8 6 0 9ZM16 16H7Q8 8 16 9Z', B),
    pattern: fill('M0 0L4 4L8 0L12 4L16 0V4L12 8L16 12V16L12 12L8 16L4 12L0 16V12L4 8L0 4ZM8 4L5 8L8 12L11 8Z'),
    swatch: line('M1 1H15V15H1Z', W, 1.5) + box(3, 3, 10, 10, B),
    unknown: '<text x="3" y="15" font-size="19" font-weight="bold" fill="#eee">?</text>',
    evenodd: '<path fill-rule="evenodd" fill="#eee" d="M8 2Q11-2 14 1Q17 4 14 10Q11 16 8 16Q5 16 2 10Q-1 4 2 1Q5-2 8 2ZM8 4Q4 9 5 11Q8 14 11 11Q12 9 8 4Z"/>',
    nonzero: fill('M8 2Q11-2 14 1Q17 4 14 10Q11 16 8 16Q5 16 2 10Q-1 4 2 1Q5-2 8 2Z'),
    align: line('M1 0V16', G, 1.5) + box(4, 2, 7, 3) + box(4, 7, 12, 3) + box(4, 12, 9, 3),
    grid: box(1, 2, 14, 12) + line('M1 6H15M1 10H15M4.5 2V14M8 2V14M11.5 2V14', '#303030', 1),
    circular: '<circle cx="8" cy="8" r="6" fill="none" stroke="#eee" stroke-width="3.5" stroke-dasharray="4.3 2"/>',
    handles: dash(1, 1, 14, 14, G) + box(4, 4, 8, 8),
    group: box(0, 0, 2, 2, '#0d6a15') + box(14, 0, 2, 2, '#0d6a15') + box(0, 14, 2, 2, '#0d6a15') + box(14, 14, 2, 2, '#0d6a15') + box(2, 3, 8, 2) + box(5, 7, 9, 2) + box(3, 11, 8, 2),
    alLeft: line('M1 0V16', G, 1.5) + box(3, 2, 10, 3) + box(3, 7, 7, 3) + box(3, 12, 9, 3),
    alRight: line('M14 0V16', G, 1.5) + box(3, 2, 9, 3) + box(6, 7, 6, 3) + box(4, 12, 8, 3),
    alCenter: box(2, 2, 12, 3) + box(4, 7, 8, 3) + box(2, 12, 12, 3) + line('M8 0V16', G, 1.5),
    alRightAnchor: line('M12 0V16M12 1H15', G, 1.5) + box(1, 2, 9, 3) + box(3, 7, 7, 3) + box(1, 12, 9, 3),
    alLeftAnchor: line('M4 0V16M1 1H4', G, 1.5) + box(6, 2, 9, 3) + box(6, 7, 7, 3) + box(6, 12, 9, 3),
    alTextH: line('M2 0V16', G, 1.5) + glyph(4, 7, 10, 'a') + glyph(3, 14, 11, 'y'),
    alTop: line('M0 1H16', G, 1.5) + box(2, 3, 3, 9) + box(7, 3, 3, 7) + box(12, 3, 3, 10),
    alBottom: line('M0 15H16', G, 1.5) + box(2, 3, 3, 10) + box(7, 6, 3, 7) + box(12, 5, 3, 8),
    alMiddle: box(2, 2, 3, 12) + box(7, 4, 3, 8) + box(12, 2, 3, 12) + line('M0 8H16', G, 1.5),
    alBottomAnchor: line('M0 12H16M15 12V15', G, 1.5) + box(2, 2, 3, 8) + box(7, 4, 3, 6) + box(12, 1, 3, 9),
    alTopAnchor: line('M0 4H16M15 1V4', G, 1.5) + box(2, 6, 3, 6) + box(7, 6, 3, 8) + box(12, 6, 3, 9),
    alTextV: line('M0 11H16', G, 1.5) + glyph(1, 10, 13, 'ya'),
    diLeft: line('M2 0V5M9 0V5', G, 1) + box(2, 7, 5, 8) + box(10, 7, 5, 5),
    diCenter: line('M4 0V5M12 0V5', G, 1) + box(1, 7, 5, 8) + box(9, 7, 6, 5),
    diRight: line('M6 0V5M14 0V5', G, 1) + box(2, 7, 4, 5) + box(9, 7, 6, 8),
    diGapH: line('M3 2H7M9 2H13', G, 1.5) + box(0, 5, 3, 10) + box(6, 6, 4, 6) + box(13, 5, 3, 10),
    diTextH: line('M1 2H10M1 0V4M10 0V4', G, 1) + glyph(0, 13, 13, 'ay'),
    diTop: line('M0 2H6M0 9H6', G, 1) + box(6, 2, 10, 5) + box(5, 9, 6, 5),
    diMiddle: line('M0 4H6M0 11H6', G, 1) + box(5, 2, 10, 5) + box(7, 9, 6, 5),
    diBottom: line('M0 7H6M0 14H6', G, 1) + box(7, 2, 6, 5) + box(6, 9, 10, 5),
    diGapV: line('M2 3V13M0 3H4M0 8H4M0 13H4', G, 1) + box(6, 0, 10, 3) + box(6, 6, 6, 3) + box(6, 12, 10, 3),
    diTextV: line('M1 4H6M1 14H6M3 4V14', G, 1) + glyph(10, 6, 10, 'a') + glyph(8, 13, 11, 'y'),
    graph: line('M3 4L12 3L9 10L3 4M9 10L14 13', W, 1.5) + '<g fill="#353535" stroke="#eee"><circle cx="3" cy="4" r="2"/><circle cx="12" cy="3" r="2"/><circle cx="8" cy="10" r="2"/><circle cx="14" cy="13" r="2"/></g>',
    swapSel: box(1, 1, 6, 5) + box(9, 9, 7, 6) + line('M9 2Q13 2 13 7', W, 1.5) + fill('M2 7L8 12L5 12L4 15Z', B),
    swapZ: box(1, 1, 6, 5) + box(9, 9, 7, 6) + line('M9 2Q13 2 13 7', W, 1.5) + line('M1 9H7M2 12H8M1 15H7', B, 1.5),
    swapRot: box(1, 1, 6, 5) + box(9, 9, 7, 6) + line('M9 2Q13 2 13 7', W, 1.5) + dash(2, 9, 5, 5, B),
    random: box(3, 1, 5, 4) + box(10, 1, 4, 4) + box(0, 6, 4, 4) + box(6, 6, 4, 4) + box(12, 6, 4, 4) + box(3, 11, 5, 4) + box(10, 11, 4, 4),
    unclump: box(0, 6, 4, 4) + box(11, 1, 4, 4) + box(12, 6, 3, 3) + box(11, 11, 4, 4) + line('M4 8L10 3M4 8L10 13', W, 1),
    overlap: box(1, 0, 3, 2) + box(1, 4, 3, 12) + box(6, 0, 4, 16) + box(12, 0, 3, 16),
    docNew: sheet(-1) + line('M14 0V6M11 3H17', G, 2),
    open: fill('M0 14V1H6L7 3H14V6H4Z') + fill('M5 7H17L14 15H1Z'),
    save: line('M8 0V7', G, 2) + fill('M4 4H12L8 8Z', G) + fill('M2 8L0 11V15H16V11L14 8H12L13 11H3L4 8Z'),
    print: box(4, 1, 8, 3) + box(0, 5, 16, 5, '#bbb') + box(4, 9, 8, 6),
    undo: line('M3 5H11Q14 5 14 9Q14 12 11 12', '#777', 2) + fill('M0 5L5 1V9Z', '#777'),
    redo: line('M13 5H5Q2 5 2 9Q2 12 5 12', '#777', 2) + fill('M16 5L11 1V9Z', '#777'),
    duplicate: box(0, 1, 11, 8) + '<rect x="5" y="6" width="11" height="9" fill="#eee" stroke="#353535"/>',
    cut: line('M2 1L12 12M14 1L4 12', W, 2) + '<g fill="none" stroke="#eee" stroke-width="2"><circle cx="3" cy="12" r="2.3"/><circle cx="13" cy="12" r="2.3"/></g>',
    paste: line('M2 2H1V15H4M12 2H14V15H11', W, 1.5) + box(3, 3, 9, 10) + box(5, 0, 5, 3),
    zoomSel: lens + dash(4, 4, 8, 6, '#353535'),
    zoomDraw: lens + '<circle cx="6" cy="7" r="3" fill="#353535"/>' + box(7, 7, 5, 4, '#353535'),
    zoomPage: lens + '<rect x="5" y="4" width="5" height="7" fill="none" stroke="#353535" stroke-width="1.5"/>',
    zoomCenter: line('M4 2H1V14H4M12 2H15V14H12M5 8H11M8 5V11', W, 1.5),
    clone: box(0, 1, 10, 7) + '<rect x="5" y="6" width="11" height="9" fill="#119a1c" stroke="#353535"/>',
    cloneLock: box(0, 1, 10, 7) + '<rect x="5" y="6" width="10" height="9" fill="#353535" stroke="#eee" stroke-width="1.5"/>' + box(8, 10, 5, 3) + line('M9 10V8.5H12V10', W, 1),
    cloneUnlock: box(0, 1, 10, 7) + '<rect x="5" y="6" width="10" height="9" fill="#353535" stroke="#eee" stroke-width="1.5"/>' + box(8, 10, 4, 3) + line('M11 10V8H13V10', W, 1),
    groupObj: corners(G) + '<circle cx="6" cy="7" r="4" fill="#eee"/>' + fill('M7 13L12 7V13Z'),
    ungroup: corners(W) + '<circle cx="6" cy="7" r="3.5" fill="#eee"/>' + fill('M7 13L12 7V13Z', '#888'),
    text: fill('M2 1H14V5H12L11.5 3H9V13L11 13.5V15H5V13.5L7 13V3H4.5L4 5H2Z'),
    xml: line('M1 1H15V15H1Z', W, 1.5) + box(1, 1, 14, 3, G) + line('M6 7L3 9.5L6 12M10 7L13 9.5L10 12', W, 1.3),
    selectors: line('M1 1H15V15H1Z', W, 1.5) + box(1, 1, 14, 3, P) + line('M6 6Q4 6 5 9Q4 9 5 12L6 13M10 6Q12 6 11 9Q12 9 11 12L10 13', W, 1.3),
    docProps: line('M3 2H10L13 5V10M3 2V14H8', W, 2) + '<circle cx="8" cy="8" r="2.5" fill="none" stroke="#eee" stroke-width="1.5"/>' + line('M9 9L14 15', W, 2.5),
    prefs: line('M2 2L14 14M14 2L2 14', W, 2.5) + '<g fill="none" stroke="#eee" stroke-width="2"><circle cx="13" cy="3" r="2"/><circle cx="3" cy="13" r="2"/><circle cx="13" cy="13" r="1.5"/></g>'
};

const page = c => line('M3 1H10L13 5V15H3Z', c, 2) + line('M9 1V6H13', c, 1.5);
icons.layerGreen = page('#34a94c');
icons.layerBlue = page('#3b78e7');
icons.layerGrey = page('#a9a9a9');
icons.shape = line('M2 2H14V14H2Z', '#a9a9a9', 2);

const svg = name => `<svg class="icon" viewBox="0 0 16 16" aria-hidden="true">${icons[name]}</svg>`;

document.querySelectorAll('[data-buttons]').forEach(bar => {
    bar.innerHTML = bar.dataset.buttons.split(' ').map(name =>
        name === '|' ? '<hr>' : `<button aria-label="${name}">${svg(name)}</button>`).join('');
});
document.querySelectorAll('[data-icon]').forEach(el => {
    el.innerHTML = svg(el.dataset.icon);
});

// ---------- Rulers ----------
let topLabels = '', leftLabels = '';
for (let mm = -100; mm <= 410; mm += 10) topLabels += `<span>${mm}</span>`;
for (let mm = -10; mm <= 290; mm += 10) leftLabels += `<span>${mm}</span>`;
document.querySelector('.ruler-top').innerHTML = topLabels;
document.querySelector('.ruler-left').innerHTML = leftLabels;

// ---------- Layers ----------
const layers = [
    ['LegendsGMKTxtI...', 'Green', 0, 0],
    ['LegendsGMKTxt', 'Green', 1, 0],
    ['LegendsGMKIcon', 'Green', 1, 0],
    ['LegendsGMKNor...', 'Green', 1, 0],
    ['SubLegendsHira...', 'Blue', 1, 0],
    ['TemplateFront', 'Grey', 1, 1],
    ['TemplateTop', 'Grey', 0, 1],
    ['BG', '', 0, 1]
];
document.querySelector('.layer-list').innerHTML = layers.map(([name, color, hidden, locked]) => `
    <div class="layer${name === 'TemplateTop' ? ' selected' : ''}">
        <span class="expand">${color ? svg('expand') : ''}</span>
        <span>${svg(color ? 'layer' + color : 'shape')}</span>
        <span class="name">${name}</span>
        <span>${hidden ? svg('eyeClosed') : ''}</span>
        <span>${locked ? svg('lock') : ''}</span>
        <span class="tag ${color.toLowerCase()}"></span>
    </div>`).join('');

// ---------- Palette ----------
const colors = ['#000', '#1a1a1a', '#333', '#4d4d4d', '#666', '#808080', '#999', '#b3b3b3', '#ccc', '#e6e6e6', '#ececec', '#f2f2f2', '#f9f9f9', '#fff',
    '#800000', '#f00', '#808000', '#ff0', '#008000', '#0f0', '#008080', '#0ff', '#000080', '#00f', '#800080', '#f0f'];
for (let hue = 0; hue <= 168; hue += 24) {
    for (let i = 1; i <= 11; i++) colors.push(`hsl(${hue} 100% ${i * 8.35}%)`);
    for (let i = 1; i <= 9; i++) colors.push(`hsl(${hue} 57% ${i * 10}%)`);
    for (let i = 1; i <= 7; i++) colors.push(`hsl(${hue} 13% ${i * 12.5}%)`);
}
document.querySelector('.palette').innerHTML =
    '<div class="swatch swatch-none"><svg viewBox="0 0 17 16" preserveAspectRatio="none"><path d="M1 0L16 16M16 0L1 16" stroke="#8b1a1a" stroke-width="1.5"/></svg></div>' +
    colors.slice(0, 220).map(c => `<div class="swatch" style="background:${c}"></div>`).join('');

// ---------- Keyboard drawing ----------
const U = 114.2;
const esc = t => t.replace(/&/g, '&amp;').replace(/</g, '&lt;');
const text = (cls, x, y, t) => `<text class="legend ${cls}" x="${x}" y="${y}">${esc(t)}</text>`;
const word = (x, t, y = 48) => text('', x, y, t);
const symbol = (x, y, t) => text('symbol', x, y, t);
const letter = (t, x = 7, y = 36) => text('letter', x, y, t);
const brackets = (a, b) => text('bracket', 6, 30, a) + text('bracket', 6, 69, b);
const at = (x, y, s) => `<g transform="translate(${x} ${y})">${s}</g>`;
const stroke = (d, w = 3) => `<path class="stroke" style="stroke-width:${w}" d="${d}"/>`;
const solid = d => `<path fill="#fff" d="${d}"/>`;
const caret = stroke('M9 37L19 23L29 37');
const two = (a, b) => (a === '^' ? caret : symbol(7, 37, a)) + symbol(7, 72, b);

const ret = (x, y) => at(x, y, stroke('M46 1V14H12') + solid('M0 14L17 4L13 14L17 24Z'));
const shiftArrow = (x, y) => at(x, y, stroke('M18 2L34 19H27V35H9V19H2Z'));
const smallArrow = at(14, 42, stroke('M6 0H18') + solid('M0 0L9 -6L7 0L9 6Z'));
const arrow = stroke('M12 0H34') + solid('M0 0L18 -9L14 0L18 9Z');
const turn = (x, y, deg) => `<g transform="translate(${x} ${y}) rotate(${deg})">${arrow}</g>`;
const tab = x => word(x, 'Tab', 49) + at(x, 18, stroke('M1 -7V7') + arrow) + `<g transform="translate(${x + 36} 67) rotate(180)">${stroke('M1 -7V7')}${arrow}</g>`;
const enter = x => ret(x, 34) + word(x + 53, 'Enter', 49);
const enterStack = (x, y) => word(x, 'Enter', y) + ret(x, y + 13);
const shift = (x, y = 24) => shiftArrow(x, y) + word(x + 43, 'Shift', y + 25);
const backspace = t => smallArrow + word(36, t);
const lines = (x, a, b) => word(x, a, 37) + word(x, b, 61);

// One entry per key: [column, width, legend, height]
const rows = [
    [[7.25, 1.5, word(14, 'Fn')], [8.75, 1, word(8, 'Ctrl')], [9.75, 1, word(7, 'Alt')], [11.75, 1.75, backspace('Backspace')]],
    [[0, 1.5, word(8, 'Caps Lock', 49)], [1.5, 1.5, word(5, 'Delete')], [3, 1.75, word(10, 'Control', 49)], [4.75, 1, word(7, 'F13')], [5.75, 1.5, word(6, 'Super', 49)],
        [8.25, 2, shift(15)], [10.25, 1.5, shift(14)], [11.75, 1, word(10, 'Shift', 49)]],
    [[0, 1.75, word(12, 'Lock')], [1.75, 1.25, tab(10)], [3, 2, enter(13)], [5, 1, stroke('M10 15L23 24L10 33') + stroke('M23 49L10 58L23 67')], [7, 1, enterStack(11, 31)],
        [8, 1, word(6, 'Print')], [9, 1, lines(6, 'Scroll', 'Lock')], [10, 1, word(7, 'Pause')], [11, 1, lines(5, 'Num', 'Lock')],
        [12, 1, stroke('M10 41H29') + '<circle cx="19.5" cy="33" r="2.5" fill="#fff"/><circle cx="19.5" cy="50" r="2.5" fill="#fff"/>'],
        [13, 1, stroke('M10 33L26 49M26 33L10 49', 2)], [14, 1, stroke('M8 40H28', 4)]],
    [[0, 1.75, shift(6, 18)], [1.75, 1.25, word(12, 'Code')], [3, 1, word(11, 'Back')], [4, 1, tab(15)],
        [8, 1, word(6, 'Insert')], [9, 1, word(6, 'Home')], [10, 1, word(6, 'PgUp')], [11, 1, letter('7')], [12, 1, letter('8', 8)], [13, 1, letter('9', 9)],
        [14, 1, stroke('M11 91H44M28 74V108', 4), 2]],
    [[0, 1.25, lines(5, 'Caps', 'Lock')], [1.75, 1.25, word(12, 'System')], [3, 1, word(7, 'Sys')], [4, 1, word(6, 'Code')], [5, 1.75, enter(9)], [6.75, 1.25, enterStack(24, 32)],
        [8, 1, word(4, 'Delete')], [9, 1, word(4, 'End')], [10, 1, word(7, 'PgDn')], [11, 1, letter('4', 5)], [12, 1, letter('5', 8)], [13, 1, letter('6', 8)]],
    [[0, 1, stroke('M9 26H31V35', 4) + stroke('M9 62L13 70')], [1, 1, stroke('M15 16V24M25 16V24') + symbol(7, 69, '2')], [2, 1, symbol(7, 35, '£') + symbol(7, 70, '3')], [3, 1, word(7, 'Fn')],
        [5.5, 1.5, enter(11)], [7, 1, word(7, 'Raise')], [8, 1, stroke('M7 35H26M7 45H26', 4)], [9, 1, turn(15, 11, 90)], [10, 1, stroke('M8 40H28M18 30V51')],
        [11, 1, letter('1')], [12, 1, letter('2', 8)], [13, 1, letter('3')], [14, 1, enterStack(7, 103), 2]],
    [[0, 1.25, shift(6, 20)], [1.25, 1, stroke('M12 10V32') + stroke('M12 47L21 67')], [2.25, 1, symbol(6, 31, '@') + stroke('M15 55V66')],
        [3.25, 1, stroke('M7 19Q9 12 15 16Q23 22 27 13') + letter('#', 4, 75)], [5.5, 1.5, backspace('Back')], [7, 1, word(7, 'Lower')],
        [8, 1, turn(7, 39, 0)], [9, 1, turn(15, 48, -90)], [10, 1, turn(42, 39, 180)], [11, 2, letter('0', 10, 35)], [13, 1, '<circle cx="11" cy="34" r="3.5" fill="#fff"/>']],
    [[0, 1, word(8, 'Esc')], ...[1, 2, 3, 4, 5, 6, 7, 8, 9].map(n => [n, 1, word(8, 'F' + n)]), ...[10, 11, 12].map(n => [n, 1, word(6, 'F' + n)]),
        [13, 1, letter('0', 5)], [14, 1, letter('00', 5)]],
    [[0, 1, stroke('M8 35Q12 22 21 30Q32 39 37 25', 4) + stroke('M9 62L14 70')], ...['!1', '@2', '#3', '$4', '%5', '^6', '&7', '*8', '(9', ')0'].map((s, i) => [i + 1, 1, two(s[0], s[1])]),
        [11, 1, stroke('M10 34H27', 4) + stroke('M9 58H18')], [12, 1, stroke('M8 25H23M15 18V33') + stroke('M9 60H22M9 67H22')], [13, 2, backspace('Backspace')]],
    [[0, 1.5, tab(15)], ...[...'QWERTYUIOP'].map((c, i) => [i + 1.5, 1, letter(c, 6, 38)]),
        [11.5, 1, brackets('{', '[')], [12.5, 1, brackets('}', ']')],
        [13.5, 1.5, stroke('M17 12V36', 4) + stroke('M17 52L27 72', 4)]],
    [[0, 1.75, word(10, 'Caps Lock', 50)], ...[...'ASDFGHJKL'].map((c, i) => [i + 1.75, 1, letter(c, 6)]),
        [10.75, 1, text('bracket', 7, 36, ':') + text('bracket', 7, 71, ';')], [11.75, 1, stroke('M9 30V37M18 30V37') + stroke('M14 67V74')], [12.75, 2.25, enter(11)]],
    [[0, 2.25, shift(16, 25)], ...[...'ZXCVBNM'].map((c, i) => [i + 2.25, 1, letter(c, 6)]),
        [9.25, 1, stroke('M21 19L8 28L21 37') + text('bracket', 5, 72, ',')], [10.25, 1, stroke('M8 19L21 28L8 37') + text('bracket', 5, 72, '.')],
        [11.25, 1, symbol(7, 37, '?') + stroke('M10 73L20 54')], [12.25, 2.75, shift(14, 25)]],
    [[0, 1.25, word(14, 'Control')], [1.25, 1.25, word(6, 'Super', 49)], [2.5, 1.25, word(15, 'Alt', 49)],
        [10, 1.25, word(15, 'Alt', 49)], [11.25, 1.25, word(7, 'Super', 49)], [12.5, 1.25, word(14, 'Fn', 49)], [13.75, 1.25, word(14, 'Control')]],
    [[0, 1.5, word(11, 'Control', 49)], [1.5, 1, word(6, 'Super', 49)], [2.5, 1.5, word(15, 'Alt', 49)],
        [11, 1.5, word(15, 'Alt', 49)], [12.5, 1, word(6, 'Super', 49)], [13.5, 1.5, word(11, 'Control', 49)]]
];

const cap = (w, h) => `<path class="keycap" d="M9 0H${w - 9}Q${w} 0 ${w} 9V${h - 10}Q${w} ${h - 1} ${w - 9} ${h - 1}Q${w / 2} ${h + 2} 9 ${h - 1}Q0 ${h - 1} 0 ${h - 10}V9Q0 0 9 0Z"/>`;
const place = (col, row, s) => at((20 + col * U).toFixed(1), (118 + row * U).toFixed(1), s);

let keys = rows.map((row, r) => row.map(([col, w, legend, h = 1]) =>
    place(col, r, cap(w * U - 40, (h - 1) * U + 87) + legend)).join('')).join('');

// The two L-shaped Enter keys
keys += place(12.75, 0, '<path class="keycap" d="M95 0H208Q217 0 217 9V191Q217 200 208 200Q108 203 9 200Q0 200 0 191V124Q0 115 9 115H77Q86 115 86 106V9Q86 0 95 0Z"/>' + enterStack(120, 92));
keys += place(4, 5, '<path class="keycap" d="M9 0H122Q131 0 131 9V191Q131 200 122 200Q80 203 38 200Q29 200 29 191V97Q29 88 20 88H9Q0 88 0 79V9Q0 0 9 0Z"/>' + enterStack(54, 88));

document.querySelector('.canvas').innerHTML =
    `<svg viewBox="0 0 3127 1885" preserveAspectRatio="xMinYMin meet">${at(627.5, 90.5, '<rect width="1713" height="1713" stroke="#fff"/>' + keys)}</svg>`;
```
